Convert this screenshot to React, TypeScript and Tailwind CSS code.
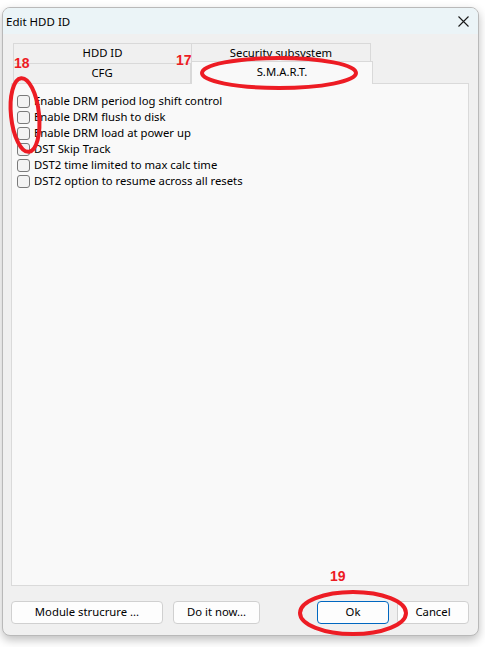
import React from "react";

const items = [
  "Enable DRM period log shift control",
  "Enable DRM flush to disk",
  "Enable DRM load at power up",
  "DST Skip Track",
  "DST2 time limited to max calc time",
  "DST2 option to resume across all resets",
];

export default function App() {
  return (
    <div
      className="relative w-[485px] h-[647px] bg-white overflow-hidden text-[11.3px] text-black"
      style={{ fontFamily: '"Noto Sans", "Segoe UI", sans-serif' }}
    >
      <div className="absolute left-[2px] top-[7px] w-[477px] h-[629px] flex flex-col rounded-[8px] border border-[#b9b9b9] bg-[#f0f0f0] shadow-[0_4px_10px_rgba(0,0,0,0.25)] overflow-hidden">
        {/* Title bar */}
        <div className="h-[26px] flex items-center justify-between bg-[#ebf4f7] pl-[3px] pr-[9px]">
          <span className="text-[11.5px] leading-none pt-px">Edit HDD ID</span>
          <svg width="11" height="11" viewBox="0 0 11 11" className="mt-px">
            <path d="M0.5 0.5 L10.5 10.5 M10.5 0.5 L0.5 10.5" stroke="#1a1a1a" strokeWidth="1.1" />
          </svg>
        </div>

        {/* Body */}
        <div className="flex flex-col pl-[8px] pr-[9px] pt-[9px]">
          {/* Tabs */}
          <div className="flex flex-col ml-[2px]">
            <div className="flex h-[20px]">
              <div className="w-[179px] border border-b-0 border-[#d9d9d9] flex items-center justify-center">HDD ID</div>
              <div className="w-[179px] border border-b-0 border-l-0 border-[#d9d9d9] flex items-center justify-center">Security subsystem</div>
            </div>
            <div className="flex h-[20px]">
              <div className="w-[178px] border border-b-0 border-[#d9d9d9] flex items-center justify-center">CFG</div>
              <div className="relative z-10 w-[182px] h-[23px] -mt-[2px] border border-b-0 border-[#d9d9d9] bg-[#f9f9f9] flex items-center justify-center pb-px">S.M.A.R.T.</div>
            </div>
          </div>
          {/* Panel */}
          <div className="h-[503px] border border-[#dadada] bg-[#f9f9f9] flex flex-col pt-[9px] pl-[5px]">
            {items.map((t) => (
              <div key={t} className="h-[16px] flex items-center gap-[4px]">
                <div className="w-[13px] h-[13px] rounded-[3px] border border-[#7a7a7a] bg-[#f3f3f3]" />
                <span className="leading-none">{t}</span>
              </div>
            ))}
          </div>
          {/* Buttons */}
          <div className="flex mt-[15px] h-[23px]">
            <button className="w-[152px] h-[23px] rounded-[4px] border border-[#d0d0d0] bg-[#fdfdfd]">Module strucrure ...</button>
            <button className="ml-[10px] w-[87px] h-[23px] rounded-[4px] border border-[#d0d0d0] bg-[#fdfdfd]">Do it now...</button>
            <button className="ml-[57px] w-[72px] h-[23px] rounded-[4px] border border-[#0067c0] bg-[#fdfdfd]">Ok</button>
            <button className="ml-[8px] w-[72px] h-[23px] rounded-[4px] border border-[#d0d0d0] bg-[#fdfdfd]">Cancel</button>
          </div>
        </div>
      </div>

      {/* Annotations */}
      <svg className="absolute left-0 top-0 z-20 pointer-events-none" width="485" height="647">
        <ellipse cx="25" cy="115" rx="14" ry="37" fill="none" stroke="#ed1c24" strokeWidth="4" transform="rotate(-6 25 115)" />
        <ellipse cx="279" cy="73" rx="77" ry="15" fill="none" stroke="#ed1c24" strokeWidth="4" />
        <ellipse cx="353" cy="613" rx="53" ry="21" fill="none" stroke="#ed1c24" strokeWidth="4" />
      </svg>
      <span className="absolute z-20 left-[14px] top-[56px] text-[14px] font-bold text-[#ed1c24] leading-none" style={{ fontFamily: '"Liberation Sans", Arial, sans-serif' }}>18</span>
      <span className="absolute z-20 left-[176px] top-[53px] text-[14px] font-bold text-[#ed1c24] leading-none" style={{ fontFamily: '"Liberation Sans", Arial, sans-serif' }}>17</span>
      <span className="absolute z-20 left-[330px] top-[569px] text-[14px] font-bold text-[#ed1c24] leading-none" style={{ fontFamily: '"Liberation Sans", Arial, sans-serif' }}>19</span>
    </div>
  );
}
